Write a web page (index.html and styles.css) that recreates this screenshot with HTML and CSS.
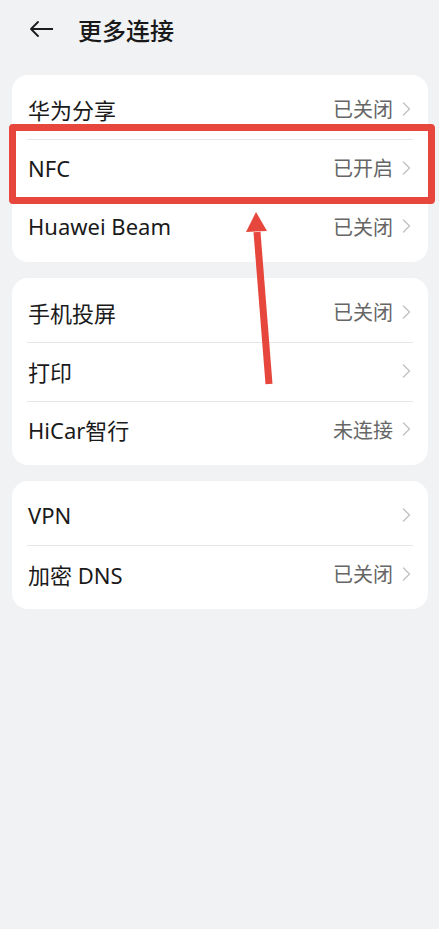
FILE: index.html
```html
<html>
    <head>
        <title>更多连接</title>
        <meta name="viewport" content="width=device-width, initial-scale=1.0">
        <link rel="stylesheet" href="styles.css">
    </head>
    <body>
        <div class="page">
            <div class="header">
                <svg class="back" width="24" height="16" viewBox="0 0 24 16">
                    <path d="M9 1 L2 8 L9 15 M2 8 H24" fill="none" stroke="#1c1c1c" stroke-width="1.8" stroke-linecap="round" stroke-linejoin="round"/>
                </svg>
                <h1 class="title">更多连接</h1>
            </div>

            <div class="card">
                <div class="row"><span class="name">华为分享</span><span class="value">已关闭</span><svg class="chev" width="9" height="14" viewBox="0 0 9 14"><path d="M1.5 1 L7.5 7 L1.5 13"/></svg></div>
                <div class="row"><span class="name">NFC</span><span class="value">已开启</span><svg class="chev" width="9" height="14" viewBox="0 0 9 14"><path d="M1.5 1 L7.5 7 L1.5 13"/></svg></div>
                <div class="row"><span class="name">Huawei Beam</span><span class="value">已关闭</span><svg class="chev" width="9" height="14" viewBox="0 0 9 14"><path d="M1.5 1 L7.5 7 L1.5 13"/></svg></div>
            </div>

            <div class="card">
                <div class="row"><span class="name">手机投屏</span><span class="value">已关闭</span><svg class="chev" width="9" height="14" viewBox="0 0 9 14"><path d="M1.5 1 L7.5 7 L1.5 13"/></svg></div>
                <div class="row"><span class="name">打印</span><span class="value"></span><svg class="chev" width="9" height="14" viewBox="0 0 9 14"><path d="M1.5 1 L7.5 7 L1.5 13"/></svg></div>
                <div class="row"><span class="name">HiCar智行</span><span class="value">未连接</span><svg class="chev" width="9" height="14" viewBox="0 0 9 14"><path d="M1.5 1 L7.5 7 L1.5 13"/></svg></div>
            </div>

            <div class="card">
                <div class="row"><span class="name">VPN</span><span class="value"></span><svg class="chev" width="9" height="14" viewBox="0 0 9 14"><path d="M1.5 1 L7.5 7 L1.5 13"/></svg></div>
                <div class="row"><span class="name">加密 DNS</span><span class="value">已关闭</span><svg class="chev" width="9" height="14" viewBox="0 0 9 14"><path d="M1.5 1 L7.5 7 L1.5 13"/></svg></div>
            </div>

            <!-- annotation: red box + arrow on NFC -->
            <div class="mark"></div>
            <svg class="arrow" width="40" height="180" viewBox="0 0 40 180">
                <path d="M16 20 L28 172" stroke="#e6463b" stroke-width="7" stroke-linecap="butt"/>
                <path d="M15 0 L26 19 L5 20 Z" fill="#e6463b"/>
            </svg>
        </div>
    </body>
</html>
```

FILE: styles.css
```css
body {
    margin: 0;
    background-color: #f1f2f4;
    font-family: 'Noto Sans', 'Noto Sans CJK SC', sans-serif;
    color: #1a1a1a;
}
.page {
    position: relative;
    min-height: 929px;
    padding: 0 11px 0 12px;
}
.header {
    display: flex;
    align-items: center;
    height: 58px;
    margin-bottom: 17px;
    padding-left: 17px;
}
.back {
    display: block;
}
.title {
    margin: 0 0 0 25px;
    font-size: 24px;
    font-weight: 500;
    font-family: 'Noto Sans CJK SC', sans-serif;
    color: #191919;
}
.card {
    background-color: #fff;
    border-radius: 16px;
    padding: 5.5px 0;
    margin-bottom: 16.5px;
}
.row {
    display: flex;
    align-items: center;
    height: 58.5px;
    margin: 0 15px;
    padding: 0 2px 2px 1px;
    box-sizing: border-box;
}
.row + .row {
    border-top: 1px solid #e6e6e6;
}
.name {
    flex: 1;
    font-size: 22px;
    color: #1a1a1a;
}
.value {
    font-size: 20px;
    color: #666;
    font-family: 'Noto Sans CJK SC', sans-serif;
}
.chev {
    display: block;
    margin-left: 9px;
    fill: none;
    stroke: #c2c2c2;
    stroke-width: 1.4;
    stroke-linecap: round;
    stroke-linejoin: round;
}
.mark {
    position: absolute;
    left: 9px;
    top: 124px;
    width: 412px;
    height: 66px;
    border: 7px solid #e6463b;
    border-radius: 4px;
}
.arrow {
    position: absolute;
    left: 241px;
    top: 212px;
}
```
